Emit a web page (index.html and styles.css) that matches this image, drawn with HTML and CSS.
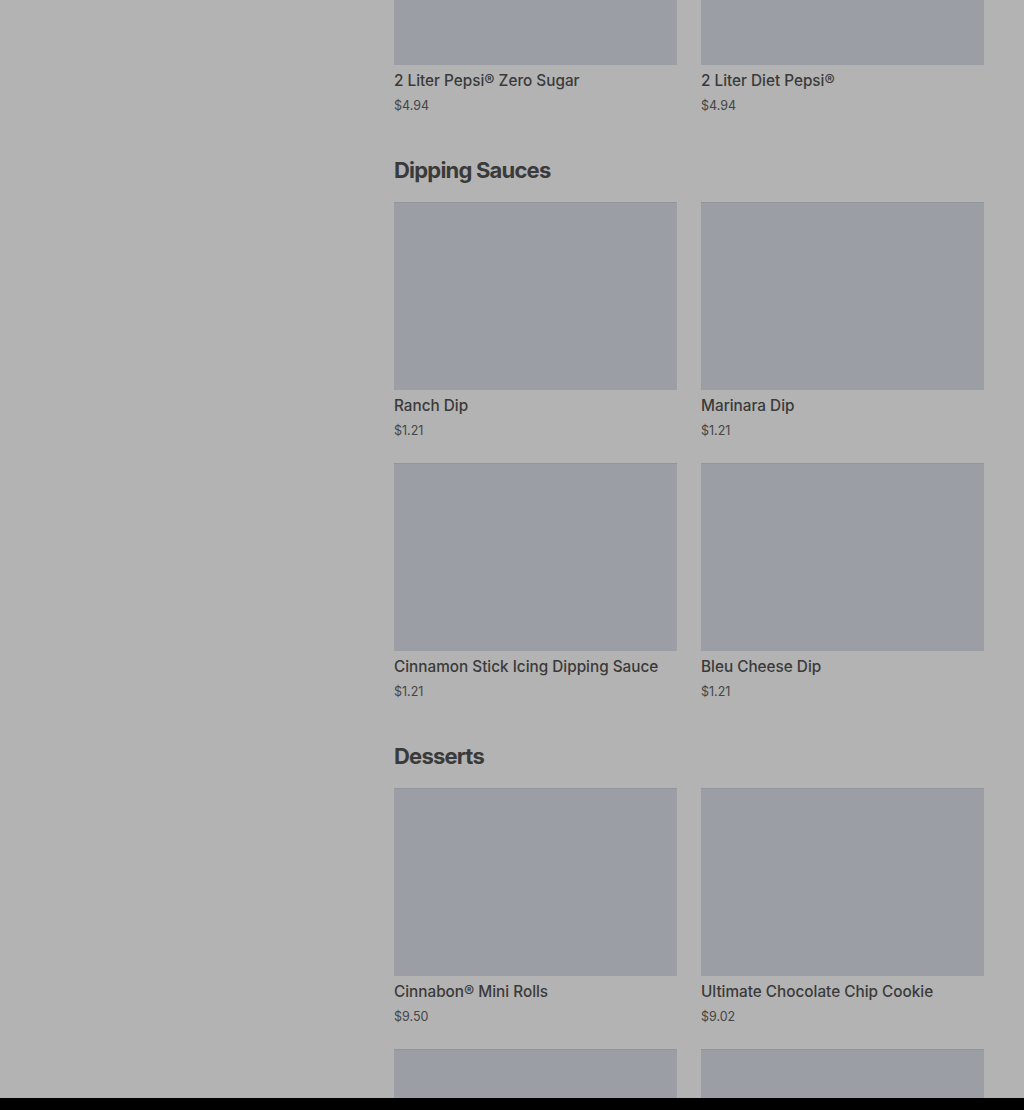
FILE: index.html
```html
<!DOCTYPE html>
<html lang="en">
<head>
  <meta charset="UTF-8" />
  <meta name="viewport" content="width=device-width, initial-scale=1.0"/>
  <title>Menu - Sides</title>
  <link rel="stylesheet" href="styles.css">
</head>
<body>
  <div class="page">
    <aside class="sidebar"></aside>

    <main class="menu">
      <!-- Boissons (haut de section coupé) -->
      <section class="menu-section first">
        <div class="grid">
          <div class="item">
            <div class="item-img"></div>
            <h3>2 Liter Pepsi® Zero Sugar</h3>
            <p>$4.94</p>
          </div>
          <div class="item">
            <div class="item-img"></div>
            <h3>2 Liter Diet Pepsi®</h3>
            <p>$4.94</p>
          </div>
        </div>
      </section>

      <section class="menu-section">
        <h2>Dipping Sauces</h2>
        <div class="grid">
          <div class="item">
            <div class="item-img"></div>
            <h3>Ranch Dip</h3>
            <p>$1.21</p>
          </div>
          <div class="item">
            <div class="item-img"></div>
            <h3>Marinara Dip</h3>
            <p>$1.21</p>
          </div>
          <div class="item">
            <div class="item-img"></div>
            <h3>Cinnamon Stick Icing Dipping Sauce</h3>
            <p>$1.21</p>
          </div>
          <div class="item">
            <div class="item-img"></div>
            <h3>Bleu Cheese Dip</h3>
            <p>$1.21</p>
          </div>
        </div>
      </section>

      <section class="menu-section">
        <h2>Desserts</h2>
        <div class="grid">
          <div class="item">
            <div class="item-img"></div>
            <h3>Cinnabon® Mini Rolls</h3>
            <p>$9.50</p>
          </div>
          <div class="item">
            <div class="item-img"></div>
            <h3>Ultimate Chocolate Chip Cookie</h3>
            <p>$9.02</p>
          </div>
          <!-- images seules : le reste est sous le bord de la fenêtre -->
          <div class="item">
            <div class="item-img"></div>
          </div>
          <div class="item">
            <div class="item-img"></div>
          </div>
        </div>
      </section>
    </main>
  </div>

  <div class="bottom-bar"></div>
</body>
</html>
```

FILE: styles.css
```css
body {
  margin: 0;
  padding: 0;
  font-family: 'Inter', 'Liberation Sans', sans-serif;
  background-color: #b3b3b3;
  color: #3a3a3a;
  overflow: hidden;
}

.page {
  display: flex;
  height: 1110px;
  overflow: hidden;
}

.sidebar {
  width: 394px;
  flex-shrink: 0;
}

.menu {
  width: 590px;
  margin-top: -123px;
}

.menu-section {
  margin-bottom: 40px;
}

h2 {
  font-size: 22px;
  font-weight: 700;
  letter-spacing: -0.8px;
  line-height: 32px;
  margin: 0 0 16px;
  color: #3a3a3a;
}

.grid {
  display: grid;
  grid-template-columns: 1fr 1fr;
  column-gap: 24px;
  row-gap: 24px;
}

.item-img {
  height: 188px;
  background-color: #9b9ea5;
  box-shadow: inset 0 1px 0 #93959d;
}

.item h3 {
  font-size: 15.3px;
  font-weight: 500;
  line-height: 20px;
  margin: 6px 0 0;
}

.item p {
  font-size: 12.5px;
  line-height: 16px;
  margin: 7px 0 0;
  color: #454545;
}

.bottom-bar {
  position: fixed;
  left: 0;
  right: 0;
  bottom: 0;
  height: 12px;
  background-color: #000;
}
```
